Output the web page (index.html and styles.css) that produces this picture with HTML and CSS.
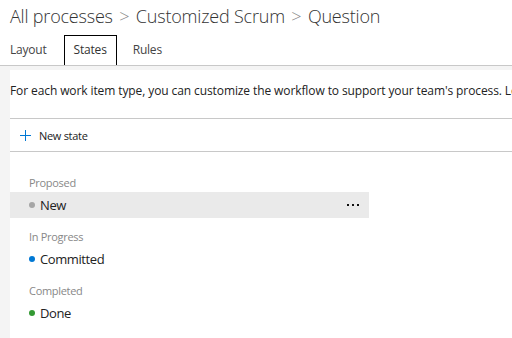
FILE: index.html
```html
<!DOCTYPE html>
<html lang="en">
<head>
    <meta charset="UTF-8">
    <title>Question - States</title>
    <link rel="stylesheet" href="styles.css">
</head>
<body>
    <!-- breadcrumb -->
    <div class="breadcrumb">
        <span>All processes</span>
        <span class="sep">&gt;</span>
        <span>Customized Scrum</span>
        <span class="sep">&gt;</span>
        <span>Question</span>
    </div>

    <!-- tabs -->
    <div class="tabs">
        <div class="tab">Layout</div>
        <div class="tab active">States</div>
        <div class="tab">Rules</div>
    </div>

    <div class="page">
        <div class="content">
            <p class="intro">For each work item type, you can customize the workflow to support your team's process. Learn more</p>

            <div class="toolbar">
                <span class="plus">
                    <svg width="11" height="11" viewBox="0 0 11 11"><path d="M5.5 0v11M0 5.5h11" stroke="#0078d4" stroke-width="1"/></svg>
                </span>
                <span>New state</span>
            </div>

            <div class="groups">
                <div class="group">
                    <div class="group-label">Proposed</div>
                    <div class="state selected">
                        <span class="dot gray"></span>
                        <span class="state-name">New</span>
                        <span class="more"><i></i><i></i><i></i></span>
                    </div>
                </div>
                <div class="group">
                    <div class="group-label">In Progress</div>
                    <div class="state">
                        <span class="dot blue"></span>
                        <span class="state-name">Committed</span>
                    </div>
                </div>
                <div class="group">
                    <div class="group-label">Completed</div>
                    <div class="state">
                        <span class="dot green"></span>
                        <span class="state-name">Done</span>
                    </div>
                </div>
            </div>
        </div>
    </div>
</body>
</html>
```

FILE: styles.css
```css
* {
    margin: 0;
    padding: 0;
    box-sizing: border-box;
}

body {
    font-family: "Open Sans", "Noto Sans", sans-serif;
    color: #333;
    background: #fff;
    width: 512px;
    height: 338px;
    overflow: hidden;
}

.breadcrumb {
    height: 35px;
    padding-left: 10px;
    font-size: 18px;
    font-weight: 300;
    letter-spacing: -0.2px;
    line-height: 32px;
    color: #333;
    white-space: nowrap;
}

.breadcrumb .sep {
    color: #888;
    margin: 0 2px;
}

.tabs {
    display: flex;
    height: 31px;
    border-bottom: 1px solid #c8c8c8;
}

.tab {
    font-size: 12px;
    letter-spacing: -0.2px;
    line-height: 30px;
    color: #444;
    padding: 0 9px;
    margin-right: 7px;
}

.tab:first-child {
    padding-left: 10px;
    margin-right: 8px;
}

.tab.active {
    border: 1px solid #000;
    border-bottom: none;
    height: 30px;
    line-height: 28px;
    color: #333;
}

.page {
    background: #f4f4f4;
    padding: 4px 0 0 10px;
    height: 272px;
}

.content {
    background: #fff;
    height: 100%;
}

.intro {
    font-size: 12px;
    letter-spacing: -0.1px;
    line-height: 16px;
    padding: 13px 0 19px;
    white-space: nowrap;
    overflow: hidden;
    color: #222;
}

.toolbar {
    display: flex;
    align-items: center;
    gap: 8px;
    height: 34px;
    padding-left: 10px;
    border-top: 1px solid #c8c8c8;
    border-bottom: 1px solid #c8c8c8;
    font-size: 11px;
    letter-spacing: -0.3px;
    color: #222;
}

.plus svg {
    display: block;
}

.groups {
    padding-top: 22px;
}

.group-label {
    font-size: 11px;
    letter-spacing: -0.3px;
    color: #888;
    padding-left: 19px;
    line-height: 18px;
}

.state {
    display: flex;
    align-items: center;
    width: 359px;
    height: 26px;
    padding-left: 19px;
    margin-bottom: 10px;
    font-size: 13px;
    letter-spacing: -0.4px;
    color: #222;
}

.state.selected {
    background: #eaeaea;
}

.dot {
    width: 6px;
    height: 6px;
    border-radius: 50%;
    margin-right: 5px;
}

.dot.gray { background: #a6a6a6; }
.dot.blue { background: #0078d4; }
.dot.green { background: #339933; }

.state-name {
    flex: 1;
}

.more {
    display: flex;
    gap: 3px;
    margin-right: 10px;
}

.more i {
    width: 2px;
    height: 2px;
    background: #111;
}
```
